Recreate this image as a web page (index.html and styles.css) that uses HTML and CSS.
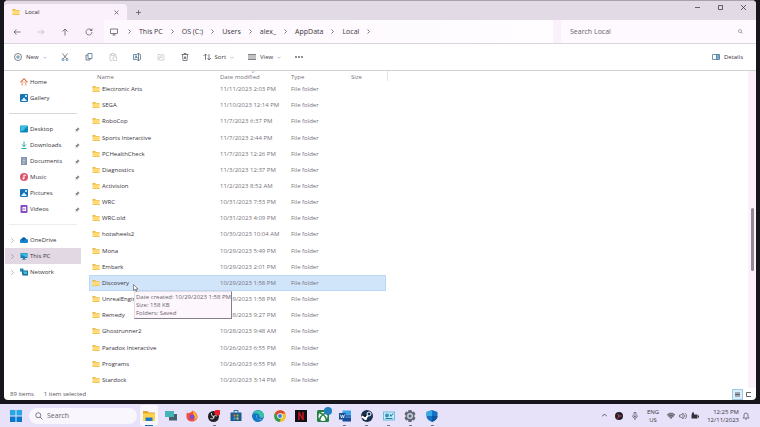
FILE: index.html
```html
<!DOCTYPE html>
<html lang="en">
<head>
  <meta charset="UTF-8" />
  <meta name="viewport" content="width=device-width, initial-scale=1.0"/>
  <title>Local</title>
  <link rel="stylesheet" href="styles.css">
</head>
<body>
  <!-- shared icons -->
  <svg class="sprite" aria-hidden="true">
    <symbol id="folder" viewBox="0 0 16 14"><path fill="#e9b646" d="M1 1h5l2 2h7v3H1z"/><path fill="#ffdc78" d="M1 4h14v9H1z"/><path fill="#f2c656" d="M1 11h14v2H1z"/></symbol>
    <symbol id="pin" viewBox="0 0 12 12"><path fill="#858187" d="M7 1l4 4-1 1-1 0-2 2 0 2-1 1-2-2-3 3 0-1 2-3-2-2 1-1h2l2-2V2z"/></symbol>
    <symbol id="right" viewBox="0 0 6 10"><path class="line" d="M1 1l4 4-4 4"/></symbol>
    <symbol id="down" viewBox="0 0 10 6"><path class="line" d="M1 1l4 4 4-4"/></symbol>
    <symbol id="lens" viewBox="0 0 16 16"><path class="line" d="M10 10l5 5M11.500 6.500a5 5 0 1 1-10 0 5 5 0 0 1 10 0z"/></symbol>
    <symbol id="pc" viewBox="0 0 16 16"><path fill="#1680ad" d="M1 2h14v10H1z"/><path fill="#36c0e4" d="M2 3h12v8L2 5z"/><path fill="#176b8f" d="M6 12h4v2H6zM4 14h8v1H4z"/></symbol>
    <symbol id="picture" viewBox="0 0 16 16"><rect width="16" height="16" rx="2" fill="#1675b8"/><path fill="#e5f5ff" d="M2 14l6-7 6 7z"/><circle cx="12" cy="4" r="2" fill="#fff"/></symbol>
  </svg>

  <div class="window">
    <header class="titlebar">
      <div class="tab">
        <svg class="icon-s"><use href="#folder"/></svg>
        <span class="tab-name">Local</span>
        <button type="button" class="plain" aria-label="Close tab"><svg class="icon-xs" viewBox="0 0 10 10"><path class="line" d="M1 1l8 8M9 1l-8 8"/></svg></button>
      </div>
      <button type="button" class="plain new-tab" aria-label="New tab"><svg class="icon-xs" viewBox="0 0 10 10"><path class="line" d="M5 0v10M0 5h10"/></svg></button>
      <div class="window-buttons">
        <button type="button" class="plain" aria-label="Minimize"><svg class="icon-xs" viewBox="0 0 10 10"><path class="line dark" d="M0 5h10"/></svg></button>
        <button type="button" class="plain" aria-label="Maximize"><svg class="icon-xs" viewBox="0 0 10 10"><path class="line dark" d="M1 1h8v8H1z"/></svg></button>
        <button type="button" class="plain" aria-label="Close"><svg class="icon-xs" viewBox="0 0 10 10"><path class="line dark" d="M0 0l10 10M10 0L0 10"/></svg></button>
      </div>
    </header>

    <div class="address-row">
      <div class="nav-buttons">
        <button type="button" class="plain" aria-label="Back"><svg class="icon-s" viewBox="0 0 16 16"><path class="line" d="M15 8H2M7 3L2 8l5 5"/></svg></button>
        <button type="button" class="plain faded" aria-label="Forward"><svg class="icon-s" viewBox="0 0 16 16"><path class="line" d="M1 8h13M9 3l5 5-5 5"/></svg></button>
        <button type="button" class="plain" aria-label="Up"><svg class="icon-s" viewBox="0 0 16 16"><path class="line" d="M8 15V2M3 7l5-5 5 5"/></svg></button>
        <button type="button" class="plain" aria-label="Refresh"><svg class="icon-s" viewBox="0 0 16 16"><path class="line" d="M14 8a6 6 0 1 1-2-4.500L14 5M14 1v4h-4"/></svg></button>
      </div>
      <nav class="path" aria-label="Path">
        <svg class="icon-s" viewBox="0 0 16 16"><path class="line" d="M1 2h14v9H1zM5 14h6M8 11v3"/></svg>
        <svg class="chev"><use href="#right"/></svg>
        <button type="button" class="plain">This PC</button>
        <svg class="chev"><use href="#right"/></svg>
        <button type="button" class="plain">OS (C:)</button>
        <svg class="chev"><use href="#right"/></svg>
        <button type="button" class="plain">Users</button>
        <svg class="chev"><use href="#right"/></svg>
        <button type="button" class="plain">alex_</button>
        <svg class="chev"><use href="#right"/></svg>
        <button type="button" class="plain">AppData</button>
        <svg class="chev"><use href="#right"/></svg>
        <button type="button" class="plain">Local</button>
        <svg class="chev"><use href="#right"/></svg>
      </nav>
      <label class="search-local">
        <input type="text" placeholder="Search Local" aria-label="Search Local">
        <svg class="icon-xs"><use href="#lens"/></svg>
      </label>
    </div>

    <div class="toolbar">
      <button type="button" class="plain tool-new"><svg class="icon-s" viewBox="0 0 16 16"><circle class="line" cx="8" cy="8" r="7"/><path class="line blue" d="M8 4v8M4 8h8"/></svg>New<svg class="chev-down"><use href="#down"/></svg></button>
      <div class="tool-icons">
        <button type="button" class="plain" aria-label="Cut"><svg class="icon-s" viewBox="0 0 16 16"><path class="line" d="M3 1l8 10M13 1L5 11"/><circle class="line blue" cx="4" cy="13" r="2"/><circle class="line blue" cx="12" cy="13" r="2"/></svg></button>
        <button type="button" class="plain" aria-label="Copy"><svg class="icon-s" viewBox="0 0 16 16"><path class="line blue" d="M6 1h8v10H6z"/><path class="line" d="M6 4H2v10h8v-3"/></svg></button>
        <button type="button" class="plain faded" aria-label="Paste"><svg class="icon-s" viewBox="0 0 16 16"><path class="line" d="M6 15H2V3h3M11 3h3v4M5 1h6v4H5zM8 8h7v7H8z"/></svg></button>
        <button type="button" class="plain" aria-label="Rename"><svg class="icon-s" viewBox="0 0 16 16"><path class="line blue" d="M9 3H1v10h8M13 3h2v10h-2M4 11l2-6 3 6M5 9h3"/><path class="line" d="M9 1h4M11 1v14M9 15h4"/></svg></button>
        <button type="button" class="plain faded" aria-label="Share"><svg class="icon-s" viewBox="0 0 16 16"><path class="line" d="M7 3H2v11h12v-4M10 2l5 4-5 4V8c-3 0-4 1-5 3 0-4 2-6 5-7z"/></svg></button>
        <button type="button" class="plain" aria-label="Delete"><svg class="icon-s" viewBox="0 0 16 16"><path class="line" d="M1 3h14M3 3l1 12h8l1-12M6 3V1h4v2M7 7v5M9 7v5"/></svg></button>
      </div>
      <button type="button" class="plain tool-text"><svg class="icon-s" viewBox="0 0 16 16"><path class="line" d="M5 14V2M1 6l4-4 3 3M12 2v12M9 10l3 4 4-4"/></svg>Sort<svg class="chev-down"><use href="#down"/></svg></button>
      <button type="button" class="plain tool-text"><svg class="icon-s" viewBox="0 0 16 16"><path class="line" d="M0 3h16M0 6h16M0 10h16M0 13h16"/></svg>View<svg class="chev-down"><use href="#down"/></svg></button>
      <button type="button" class="plain" aria-label="See more"><svg class="icon-s" viewBox="0 0 16 16"><circle cx="2" cy="8" r="1.600"/><circle cx="8" cy="8" r="1.600"/><circle cx="14" cy="8" r="1.600"/></svg></button>
      <button type="button" class="plain tool-details"><svg class="icon-s" viewBox="0 0 16 16"><path fill="#8dbbd7" d="M9 3h6v10H9z"/><path class="line blue" d="M1 3h14v10H1zM9 3v10M11 6h2M11 9h2"/></svg>Details</button>
    </div>

    <main class="content">
      <nav class="sidebar" aria-label="Folders">
        <ul>
          <li><svg class="icon-s" viewBox="0 0 16 16"><path fill="#f2b59b" d="M3 7h10v8H3z"/><path fill="#d97142" d="M8 0l8 8-2 1-6-6-6 6-2-1z"/><path fill="#fff" d="M6 9h4v6H6z"/></svg><a href="#">Home</a></li>
          <li><svg class="icon-s"><use href="#picture"/></svg><a href="#">Gallery</a></li>
        </ul>
        <hr>
        <ul>
          <li><svg class="icon-s" viewBox="0 0 16 16"><rect y="1" width="16" height="14" rx="2" fill="#1588b7"/><path fill="#39c0e5" d="M1 2h14L5 12H1z"/></svg><a href="#">Desktop</a><svg class="pin"><use href="#pin"/></svg></li>
          <li><svg class="icon-s" viewBox="0 0 16 16"><path fill="none" stroke="#25a99c" stroke-width="2" d="M8 1v10M4 7l4 4 4-4M3 15h10"/></svg><a href="#">Downloads</a><svg class="pin"><use href="#pin"/></svg></li>
          <li><svg class="icon-s" viewBox="0 0 16 16"><path fill="#8194ad" d="M2 0h12v16H2z"/><path stroke="#eef3fa" d="M5 4h6M5 7h6M5 10h6M5 13h4"/></svg><a href="#">Documents</a><svg class="pin"><use href="#pin"/></svg></li>
          <li><svg class="icon-s" viewBox="0 0 16 16"><circle cx="8" cy="8" r="8" fill="#d9566b"/><path fill="#fff" d="M7 3l5 1v2L9 5v6a2 2 0 1 1-2-2z"/></svg><a href="#">Music</a><svg class="pin"><use href="#pin"/></svg></li>
          <li><svg class="icon-s"><use href="#picture"/></svg><a href="#">Pictures</a><svg class="pin"><use href="#pin"/></svg></li>
          <li><svg class="icon-s" viewBox="0 0 16 16"><rect x="1" width="14" height="16" rx="2" fill="#8750bd"/><path fill="#fff" d="M5 4h7v8H5z"/><path fill="#8750bd" d="M7 6l4 2-4 2z"/></svg><a href="#">Videos</a><svg class="pin"><use href="#pin"/></svg></li>
        </ul>
        <hr class="faint">
        <ul>
          <li><svg class="chev"><use href="#right"/></svg><svg class="icon-s" viewBox="0 0 16 16"><path fill="#1683cd" d="M4 14a4 4 0 0 1-1-8 5 5 0 0 1 9 0 4 4 0 0 1 1 8z"/><path fill="#1160a8" d="M3 6a5 5 0 0 1 9 0l-6 4z"/></svg><a href="#">OneDrive</a></li>
          <li class="current"><svg class="chev"><use href="#right"/></svg><svg class="icon-s"><use href="#pc"/></svg><a href="#">This PC</a></li>
          <li><svg class="chev"><use href="#right"/></svg><svg class="icon-s" viewBox="0 0 16 16"><path fill="#2388b0" d="M0 1h7v6H0z"/><path fill="#176f9a" d="M3 5h13v10H5z"/><path fill="#43bfdc" d="M6 7h8v5H8z"/></svg><a href="#">Network</a></li>
        </ul>
      </nav>

      <table class="files">
        <thead>
          <tr><th>Name</th><th>Date modified<svg class="sort-mark"><use href="#down"/></svg></th><th>Type</th><th>Size</th></tr>
        </thead>
        <tbody>
          <tr><td><svg class="icon-s"><use href="#folder"/></svg>Electronic Arts</td><td>11/11/2023 2:03 PM</td><td>File folder</td><td></td></tr>
          <tr><td><svg class="icon-s"><use href="#folder"/></svg>SEGA</td><td>11/10/2023 12:14 PM</td><td>File folder</td><td></td></tr>
          <tr><td><svg class="icon-s"><use href="#folder"/></svg>RoboCop</td><td>11/7/2023 6:37 PM</td><td>File folder</td><td></td></tr>
          <tr><td><svg class="icon-s"><use href="#folder"/></svg>Sports Interactive</td><td>11/7/2023 2:44 PM</td><td>File folder</td><td></td></tr>
          <tr><td><svg class="icon-s"><use href="#folder"/></svg>PCHealthCheck</td><td>11/7/2023 12:26 PM</td><td>File folder</td><td></td></tr>
          <tr><td><svg class="icon-s"><use href="#folder"/></svg>Diagnostics</td><td>11/3/2023 12:37 PM</td><td>File folder</td><td></td></tr>
          <tr><td><svg class="icon-s"><use href="#folder"/></svg>Activision</td><td>11/2/2023 8:52 AM</td><td>File folder</td><td></td></tr>
          <tr><td><svg class="icon-s"><use href="#folder"/></svg>WRC</td><td>10/31/2023 7:53 PM</td><td>File folder</td><td></td></tr>
          <tr><td><svg class="icon-s"><use href="#folder"/></svg>WRC.old</td><td>10/31/2023 4:09 PM</td><td>File folder</td><td></td></tr>
          <tr><td><svg class="icon-s"><use href="#folder"/></svg>hotwheels2</td><td>10/30/2023 10:04 AM</td><td>File folder</td><td></td></tr>
          <tr><td><svg class="icon-s"><use href="#folder"/></svg>Mona</td><td>10/29/2023 5:49 PM</td><td>File folder</td><td></td></tr>
          <tr><td><svg class="icon-s"><use href="#folder"/></svg>Embark</td><td>10/29/2023 2:01 PM</td><td>File folder</td><td></td></tr>
          <tr class="selected">
            <td><svg class="icon-s"><use href="#folder"/></svg>Discovery
              <div class="tooltip" role="tooltip">Date created: 10/29/2023 1:58 PM<br>Size: 158 KB<br>Folders: Saved</div>
              <svg class="pointer" viewBox="0 0 10 16"><path fill="#fff" stroke="#333" d="M1 1v12l3-3 2 5 2-1-2-4h4z"/></svg>
            </td><td>10/29/2023 1:58 PM</td><td>File folder</td><td></td>
          </tr>
          <tr><td><svg class="icon-s"><use href="#folder"/></svg>UnrealEngine</td><td>10/29/2023 1:58 PM</td><td>File folder</td><td></td></tr>
          <tr><td><svg class="icon-s"><use href="#folder"/></svg>Remedy</td><td>10/28/2023 9:27 PM</td><td>File folder</td><td></td></tr>
          <tr><td><svg class="icon-s"><use href="#folder"/></svg>Ghostrunner2</td><td>10/28/2023 9:48 AM</td><td>File folder</td><td></td></tr>
          <tr><td><svg class="icon-s"><use href="#folder"/></svg>Paradox Interactive</td><td>10/26/2023 6:55 PM</td><td>File folder</td><td></td></tr>
          <tr><td><svg class="icon-s"><use href="#folder"/></svg>Programs</td><td>10/26/2023 6:55 PM</td><td>File folder</td><td></td></tr>
          <tr><td><svg class="icon-s"><use href="#folder"/></svg>Stardock</td><td>10/20/2023 3:14 PM</td><td>File folder</td><td></td></tr>
        </tbody>
      </table>

      <div class="scrollbar"><div class="thumb"></div></div>
    </main>

    <footer class="status">
      <span>89 items</span>
      <span>1 item selected</span>
      <div class="view-buttons">
        <button type="button" class="plain on" aria-label="Details view"><svg class="icon-xs" viewBox="0 0 10 10"><path class="line dark" d="M0 2h10M0 5h10M0 8h10"/></svg></button>
        <button type="button" class="plain" aria-label="Large icons"><svg class="icon-xs" viewBox="0 0 10 10"><path class="line dark" d="M10 1H1v8h9"/></svg></button>
      </div>
    </footer>
  </div>

  <div class="taskbar">
    <button type="button" class="plain start" aria-label="Start"><svg class="icon-l" viewBox="0 0 24 24"><path fill="#27a6e5" d="M0 0h11v11H0zM13 0h11v11H13z"/><path fill="#0878cc" d="M0 13h11v11H0zM13 13h11v11H13z"/></svg></button>
    <label class="task-search">
      <svg class="icon-s"><use href="#lens"/></svg>
      <input type="text" placeholder="Search" aria-label="Search">
    </label>
    <div class="apps">
      <button type="button" class="plain active" aria-label="File Explorer"><svg class="icon-l" viewBox="0 0 24 24"><path fill="#e7a72c" d="M0 2h9l3 3h12v6H0z"/><path fill="#ffd24f" d="M0 7h24v15H0z"/><path fill="#1c79c4" d="M5 15h14v7H5z"/></svg></button>
      <button type="button" class="plain" aria-label="Task view"><svg class="icon-l" viewBox="0 0 24 24"><path fill="#44606f" d="M8 8h16v13H8z"/><path fill="#43b5b9" d="M0 2h18v12H0z"/></svg></button>
      <button type="button" class="plain" aria-label="Firefox"><svg class="icon-l" viewBox="0 0 24 24"><path fill="#f24d3d" d="M2 5l3 2c3-3 7-1 7-6 6 2 11 6 11 13a11 9 0 0 1-22 0c0-4 0-6 1-9z"/><path fill="#ffb52b" d="M13 2c5 2 9 6 9 12-1 5-4 6-6 7 3-8-1-9-3-19z"/><circle cx="12" cy="14" r="5" fill="#8849c9"/></svg></button>
      <button type="button" class="plain running" aria-label="OBS Studio"><svg class="icon-l" viewBox="0 0 24 24"><circle cx="11" cy="13" r="11" fill="#222026"/><path fill="none" stroke="#ddd" stroke-width="2" d="M7 6c-1 5 2 7 5 7M18 12c-5-2-7 0-7 4M5 17c5 2 7 0 7-4"/><circle cx="19" cy="5" r="6" fill="#ef1e2b"/></svg></button>
      <button type="button" class="plain" aria-label="Microsoft Store"><svg class="icon-l" viewBox="0 0 24 24"><path fill="none" stroke="#286fa6" stroke-width="2" d="M8 5V1h8v4"/><path fill="#1d5a8e" d="M1 5h22v17H1z"/><path fill="#ef6c3b" d="M7 9h4v4H7z"/><path fill="#8dc63f" d="M13 9h4v4h-4z"/><path fill="#36b0e8" d="M7 15h4v4H7z"/><path fill="#ffcc37" d="M13 15h4v4h-4z"/></svg></button>
      <button type="button" class="plain" aria-label="Edge"><svg class="icon-l" viewBox="0 0 24 24"><circle cx="12" cy="12" r="12" fill="#1475c5"/><path fill="#36c5a8" d="M1 9C5-3 23-1 24 11c0 6-9 6-9 2 1-5-8-9-14-4z"/><path fill="#e9f5ff" d="M11 9c-5 4-1 12 10 9-5 3-15 1-10-9z"/></svg></button>
      <button type="button" class="plain" aria-label="Chrome"><svg class="icon-l" viewBox="0 0 24 24"><circle cx="12" cy="12" r="12" fill="#f4bf2b"/><path fill="#db4537" d="M2 6a12 12 0 0 1 21 1H12l-4 8z"/><path fill="#299b54" d="M2 6l6 10 6 1-3 7A12 12 0 0 1 2 6z"/><circle cx="12" cy="12" r="5.500" fill="#fff"/><circle cx="12" cy="12" r="4" fill="#347fe0"/></svg></button>
      <button type="button" class="plain" aria-label="Netflix"><svg class="icon-l" viewBox="0 0 24 24"><path fill="#111" d="M0 0h24v24H0z"/><path fill="none" stroke="#c51624" stroke-width="3" d="M8 20V4l8 16V4"/></svg></button>
      <button type="button" class="plain" aria-label="Xbox"><svg class="icon-l" viewBox="0 0 24 24"><rect width="24" height="24" rx="3" fill="#258143"/><circle cx="12" cy="13" r="9" fill="#fff"/><path fill="none" stroke="#258143" stroke-width="3" d="M5 20c1-5 3-8 7-11 4 3 6 6 7 11M6 6l6 3 6-3"/></svg><span class="badge"></span></button>
      <button type="button" class="plain running" aria-label="Word"><svg class="icon-l" viewBox="0 0 24 24"><path fill="#37a3e8" d="M7 1h17v8H7z"/><path fill="#2675c6" d="M7 9h17v6H7z"/><path fill="#174d96" d="M7 15h17v8H7zM0 6h13v13H0z"/><path fill="none" stroke="#fff" stroke-width="1.500" d="M3 9l2 7 2-6 2 6 2-7"/></svg></button>
      <button type="button" class="plain running" aria-label="Steam"><svg class="icon-l" viewBox="0 0 24 24"><circle cx="12" cy="12" r="12" fill="#17324f"/><path stroke="#fff" stroke-width="4" d="M1 13l8 4 6-8"/><circle cx="16" cy="8" r="4" fill="#17324f" stroke="#fff" stroke-width="2"/><circle cx="9" cy="17" r="3" fill="#fff"/></svg></button>
      <button type="button" class="plain running" aria-label="Control Panel"><svg class="icon-l" viewBox="0 0 24 24"><path fill="#69bedb" d="M0 3h24v18H0z"/><path fill="#c6edf8" d="M2 5h20v14H2z"/><circle cx="8" cy="11" r="4" fill="#3794bd"/><path fill="none" stroke="#287ba4" stroke-width="2" d="M14 8l2 5 4-6M5 17h14"/></svg></button>
      <button type="button" class="plain running" aria-label="Settings"><svg class="icon-l" viewBox="0 0 24 24"><path fill="#626975" d="M9 0h6l1 4 4-1 3 5-3 4 3 4-3 5-4-1-1 4H9l-1-4-4 1-3-5 3-4-3-4 3-5 4 1z"/><circle cx="12" cy="12" r="6" fill="#c8ccd8"/><circle cx="12" cy="12" r="3" fill="#4c6680"/></svg></button>
      <button type="button" class="plain running" aria-label="Windows Security"><svg class="icon-l" viewBox="0 0 24 24"><path fill="#1671c4" d="M12 0l11 4v8c0 6-6 10-11 12C7 22 1 18 1 12V4z"/><path fill="#38a9e6" d="M12 0v12H1V4z"/><path fill="#0c579f" d="M12 12h11c0 6-6 10-11 12z"/></svg></button>
    </div>
    <div class="tray">
      <button type="button" class="plain" aria-label="Hidden icons"><svg class="icon-xs" viewBox="0 0 10 10"><path class="line dark" d="M0 7l5-5 5 5"/></svg></button>
      <svg class="icon-s" viewBox="0 0 16 16"><circle cx="8" cy="8" r="8" fill="#202026"/><path fill="none" stroke="#c84857" stroke-width="2" d="M8 8L5 4M8 8h5M8 8l-3 5"/></svg>
      <svg class="icon-s" viewBox="0 0 16 16"><path class="line" d="M6 1h4v8H6zM3 7c0 7 10 7 10 0M8 12v4"/></svg>
      <button type="button" class="plain lang">ENG<br>US</button>
      <button type="button" class="plain quick" aria-label="Network, volume, battery">
        <svg class="icon-s" viewBox="0 0 16 16"><path fill="#8b8895" d="M0 6c4-5 12-5 16 0l-8 8z"/><path class="line" d="M0 6c4-5 12-5 16 0M3 9c3-3 7-3 10 0M6 12c1-1 3-1 4 0"/></svg>
        <svg class="icon-s" viewBox="0 0 16 16"><path class="line" d="M1 6h3l4-4v12l-4-4H1zM10 5c2 2 2 4 0 6M12 2c4 4 4 8 0 12"/></svg>
        <svg class="icon-s" viewBox="0 0 16 16"><path fill="#34313b" d="M1 5h12v8H1zM14 7h2v4h-2zM2 1h4v4H2z"/></svg>
      </button>
      <div class="clock-area">
        <button type="button" class="plain clock">12:25 PM<br>12/11/2023</button>
        <button type="button" class="plain" aria-label="Notifications"><svg class="icon-s" viewBox="0 0 16 16"><path class="line" d="M2 12l2-3V6a4 4 0 0 1 8 0v3l2 3zM6 14h4"/></svg></button>
      </div>
    </div>
  </div>
</body>
</html>
```

FILE: styles.css
```css
* {
  box-sizing: border-box;
}

body {
  margin: 0;
  min-height: 100vh;
  display: flex;
  flex-direction: column;
  background: #17161d;
  color: #39353d;
  font-family: "Open Sans", "Noto Sans", sans-serif;
  font-size: 6px;
  line-height: 8px;
}

svg {
  display: block;
  flex: none;
}

.sprite {
  display: none;
}

.line {
  fill: none;
  stroke: #5a5560;
  stroke-width: 1.5;
}

.blue {
  stroke: #3b7197;
}

.dark {
  stroke: #37333b;
}

.icon-xs {
  width: 5px;
  height: 5px;
}

.icon-s {
  width: 8px;
  height: 8px;
}

.icon-l {
  width: 12px;
  height: 12px;
}

.plain {
  display: flex;
  align-items: center;
  justify-content: center;
  padding: 0;
  border: none;
  background: none;
  color: inherit;
  font: inherit;
}

.faded {
  opacity: 0.35;
}

input {
  flex: 1;
  min-width: 0;
  padding: 0;
  border: none;
  outline: none;
  background: none;
  font: inherit;
}

input::placeholder {
  color: #67626b;
}

.chev {
  width: 3px;
  height: 5px;
}

.chev-down {
  width: 4px;
  height: 3px;
  opacity: 0.6;
}

/* explorer window */
.window {
  flex: 1;
  display: flex;
  flex-direction: column;
  margin: 0 4px 4px;
  border-top: 1px solid #aaa2ab;
  border-radius: 4px;
  background: #fff;
  overflow: hidden;
}

.titlebar {
  display: flex;
  height: 19px;
  background: #e2dae5;
}

.tab {
  display: flex;
  align-items: center;
  gap: 5px;
  width: 123px;
  margin-top: 3px;
  padding: 0 8px;
  border-radius: 4px 4px 0 0;
  background: #fbf1fd;
  color: #28242b;
}

.tab-name {
  flex: 1;
}

.new-tab {
  margin: 3px 0 0 9px;
}

.window-buttons {
  display: flex;
  gap: 18px;
  height: 13px;
  margin-left: auto;
  padding-right: 10px;
}

.address-row {
  display: flex;
  gap: 8px;
  height: 24px;
  border-bottom: 1px solid #dcd5df;
  background: #fbf1fd;
  font-size: 7px;
}

.nav-buttons {
  display: flex;
  gap: 16px;
  width: 92px;
  padding-left: 9px;
}

.path {
  flex: 1;
  display: flex;
  align-items: center;
  gap: 8px;
  padding-left: 6px;
  background: linear-gradient(90deg, #fdf7fe, #fffdff);
}

.path .icon-s {
  margin-right: 2px;
}

.search-local {
  display: flex;
  align-items: center;
  width: 195px;
  padding: 0 13px 0 9px;
  background: #fef9fe;
}

.toolbar {
  display: flex;
  align-items: center;
  gap: 14px;
  height: 27px;
  padding: 0 13px 0 10px;
  border-bottom: 1px solid #d2ced3;
}

.tool-new,
.tool-text,
.tool-details {
  gap: 4px;
}

.tool-icons {
  display: flex;
  gap: 16px;
}

.tool-details {
  margin-left: auto;
}

.content {
  flex: 1;
  display: flex;
}

/* sidebar */
.sidebar {
  width: 85px;
  padding: 3px 8px 0 1px;
}

.sidebar ul {
  margin: 0;
  padding: 0;
  list-style: none;
}

.sidebar li {
  display: flex;
  align-items: center;
  gap: 2px;
  height: 16px;
  padding: 0 1px 0 15px;
}

.sidebar li:has(.chev) {
  padding-left: 6px;
}

.sidebar .chev {
  margin-right: 4px;
  opacity: 0.6;
}

.sidebar a {
  flex: 1;
  color: #37333b;
  text-decoration: none;
}

.sidebar .current {
  background: #e1d8e4;
}

.sidebar hr {
  height: 1px;
  margin: 7px 4px 7px;
  border: none;
  background: #d9d5da;
}

.sidebar .faint {
  background: #efebf0;
}

.pin {
  width: 5px;
  height: 5px;
}

/* file list */
.files {
  display: flex;
  flex-direction: column;
  width: 299px;
}

.files tr {
  display: grid;
  grid-template-columns: 130px 71px 60px 1fr;
  align-items: center;
  margin-right: 2px;
  padding-left: 1px;
}

.files thead tr {
  height: 10px;
  margin-right: 0;
  border-right: 1px solid #e6e3e7;
}

.files th {
  position: relative;
  padding: 2px 0 0;
  color: #77727b;
  font-weight: normal;
  text-align: left;
}

.files th:first-child {
  padding-left: 7px;
}

.sort-mark {
  position: absolute;
  top: 0;
  left: 31px;
  width: 4px;
  height: 2px;
}

.files tbody {
  flex: 1;
  display: grid;
  grid-auto-rows: 1fr;
}

.files td {
  padding: 0;
  color: #77727b;
}

.files td:first-child {
  position: relative;
  display: flex;
  align-items: center;
  gap: 2px;
  padding-left: 2px;
  color: #37333b;
}

.files .selected {
  background: #d0e4fa;
  box-shadow: inset 0 0 0 1px #bdd7f2;
}

.tooltip {
  position: absolute;
  z-index: 1;
  top: 12px;
  left: 44px;
  padding: 1px 0 1px 1px;
  border: 1px solid #e3dde4;
  border-right-color: #858087;
  border-bottom-color: #858087;
  background: #fdf7fd;
  color: #67626b;
  white-space: nowrap;
}

.pointer {
  position: absolute;
  z-index: 2;
  top: 5px;
  left: 43px;
  width: 5px;
  height: 8px;
}

.scrollbar {
  width: 8px;
  margin-left: auto;
  padding: 137px 2px 0 3px;
  background: #fbf1fb;
}

.thumb {
  height: 63px;
  border-radius: 2px;
  background: #918894;
}

.status {
  display: flex;
  align-items: center;
  gap: 10px;
  height: 12px;
  padding-left: 6px;
  color: #57525b;
}

.view-buttons {
  display: flex;
  gap: 3px;
  margin-left: auto;
  padding-right: 5px;
}

.view-buttons .on {
  width: 11px;
  height: 11px;
  border: 1px solid #9ecbe2;
  background: #d8eefa;
}

/* taskbar */
.taskbar {
  display: flex;
  align-items: center;
  height: 23px;
  background: #e7e1f9;
}

.start {
  padding: 0 7px 0 10px;
}

.task-search {
  display: flex;
  align-items: center;
  gap: 4px;
  width: 108px;
  height: 16px;
  padding: 0 6px;
  border-radius: 8px;
  background: #f9f6fe;
  font-size: 7px;
}

.apps {
  display: grid;
  grid-template-columns: repeat(14, 1fr);
  width: 305px;
  height: 21px;
  margin-left: 1px;
}

.apps .plain {
  position: relative;
}

.apps .active {
  margin: 0 2px;
  border-radius: 3px;
  background: #f8f5fd;
}

.apps .active::after,
.apps .running::after {
  content: "";
  position: absolute;
  bottom: 0;
  width: 3px;
  height: 1px;
  background: #77727f;
}

.apps .active::after {
  width: 8px;
  background: #1b6db6;
}

.badge {
  position: absolute;
  top: 2px;
  right: 2px;
  width: 8px;
  height: 8px;
  border-radius: 50%;
  background: #207fbd;
}

.tray {
  display: flex;
  align-items: center;
  gap: 8px;
  margin-left: auto;
  padding-right: 10px;
}

.lang {
  text-align: center;
}

.quick {
  gap: 4px;
}

.clock-area {
  display: flex;
  gap: 3px;
}

.clock {
  text-align: right;
}
```
